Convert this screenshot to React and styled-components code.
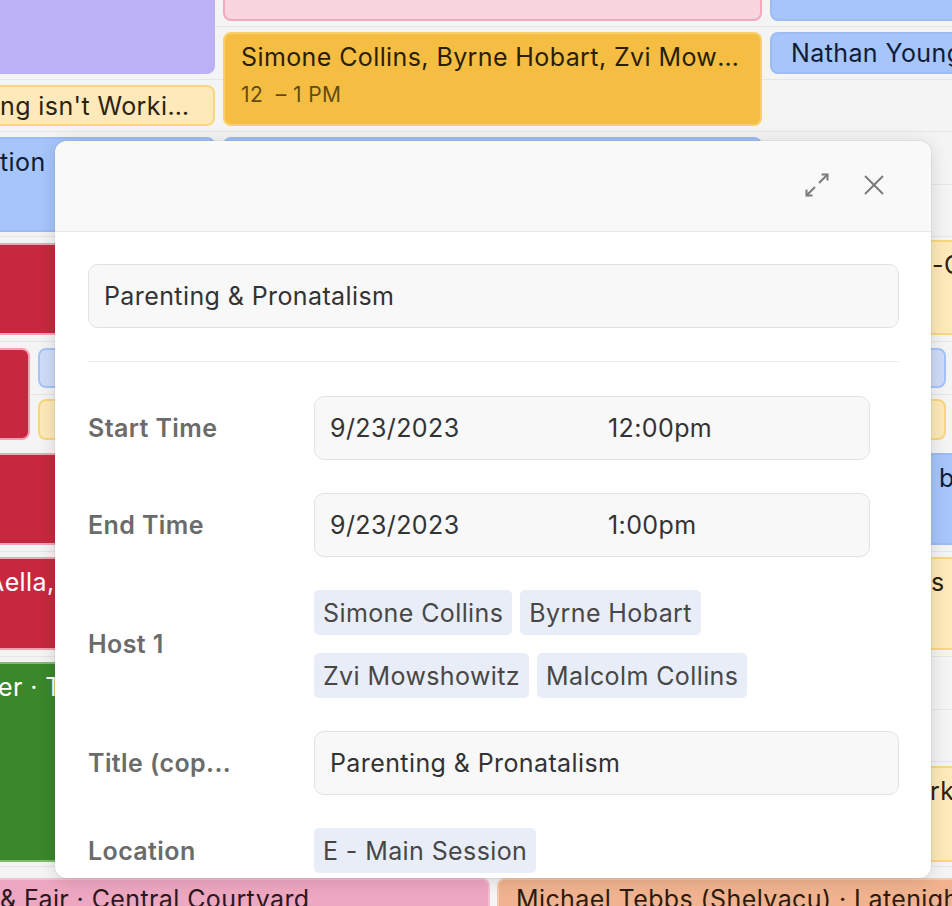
import styled, { createGlobalStyle, css } from 'styled-components';

// styles
const GlobalStyle = createGlobalStyle`
	html, body {
		margin: 0;
		padding: 0;
		overflow: hidden;
		background: #f4f4f4;
	}
	* {
		box-sizing: border-box;
	}
	body {
		font-family: Inter, 'Noto Sans', 'Liberation Sans', sans-serif;
		letter-spacing: 0.4px;
	}
`;

const tones = {
	purple: css`background: #bcb0f7; border-color: #bcb0f7; color: #1d1640;`,
	sand: css`background: #fde9b9; border-color: #f8d780; color: #2c2210;`,
	orange: css`background: #f5bd42; border-color: #f9d068; color: #2a1e05;`,
	blue: css`background: #a6c5fa; border-color: #9dbcf3; color: #0f1b36;`,
	sky: css`background: #cfdcf8; border-color: #a6c2f6; color: #0f1b36;`,
	blush: css`background: #f9d6df; border-color: #f3a8bb; color: #3a1520;`,
	red: css`background: #c8283f; border-color: #f2a2b5; color: #ffffff;`,
	green: css`background: #3b872b; border-color: #7fbb6c; color: #ffffff;`,
	pink: css`background: #eea7c0; border-color: #f4bfd2; color: #2b1820;`,
	peach: css`background: #f1b38f; border-color: #f6c8ab; color: #2d1b0e;`,
};

const Page = styled.div`
	position: relative;
	width: 952px;
	height: 906px;
	overflow: hidden;
`;

const Calendar = styled.div`
	display: flex;
	flex-direction: column;
	height: 100%;
	background-image: repeating-linear-gradient(
		to bottom,
		transparent 0,
		transparent 51.5px,
		#e6e6e6 51.5px,
		#e6e6e6 52.5px
	);
	background-position: 0 -25px;
`;

const Lanes = styled.div`
	display: flex;
	gap: 8px;
	flex: 0 0 878px;
	overflow: hidden;
	margin-left: -10px;
`;

const Lane = styled.div`
	display: flex;
	flex-direction: column;
	flex: 0 0 ${(p) => p.$w}px;
	min-width: 0;
`;

const Event = styled.div`
	flex: 0 0 auto;
	height: ${(p) => p.$h}px;
	margin-top: ${(p) => p.$mt || 0}px;
	border: 2px solid;
	border-radius: 8px;
	padding: ${(p) => (p.$short ? 4 : 8)}px 16px 0 ${(p) => p.$indent || 16}px;
	overflow: hidden;
	min-width: 0;
	${(p) => tones[p.$tone]}
`;

const EventTitle = styled.div`
	font-size: 25px;
	line-height: 30px;
	white-space: nowrap;
	overflow: hidden;
	text-indent: ${(p) => p.$shift || 0}px;
	text-overflow: ${(p) => (p.$clip ? 'clip' : 'ellipsis')};
`;

const EventTime = styled.div`
	margin-top: 10px;
	font-size: 21px;
	line-height: 26px;
	opacity: 0.72;
	white-space: pre;
`;

const Split = styled.div`
	display: flex;
	gap: 8px;
	height: ${(p) => p.$h}px;
	margin-top: ${(p) => p.$mt}px;
	padding-right: ${(p) => p.$pr || 0}px;
`;

const Stack = styled.div`
	display: flex;
	flex-direction: column;
	gap: 11px;
	flex: 1;
`;

const BottomRow = styled.div`
	display: flex;
	gap: 7px;
	flex: 0 0 40px;
	margin-left: -10px;
`;

const BottomEvent = styled(Event)`
	padding-top: 4px;
	border-radius: 8px 8px 0 0;
	border-bottom: none;
	flex: 0 0 ${(p) => p.$w}px;
`;

// modal
const Modal = styled.div`
	position: absolute;
	left: 55px;
	top: 141px;
	width: 876px;
	height: 737px;
	background: #ffffff;
	border-radius: 12px;
	box-shadow: 0 2px 18px rgba(0, 0, 0, 0.14), 0 0 0 1px rgba(0, 0, 0, 0.04);
	overflow: hidden;
	display: flex;
	flex-direction: column;
	color: #333333;
`;

const ModalHeader = styled.div`
	flex: 0 0 91px;
	display: flex;
	align-items: center;
	justify-content: flex-end;
	gap: 33px;
	padding: 0 45px 2px 0;
	background: #f9f9f9;
	border-bottom: 1px solid #e9e9e9;
`;

const IconButton = styled.button`
	display: flex;
	align-items: center;
	justify-content: center;
	width: 24px;
	height: 24px;
	padding: 0;
	border: none;
	background: none;
	color: #7b7b7b;
	cursor: pointer;
`;

const ModalBody = styled.div`
	padding: 32px 32px 0 33px;
	display: flex;
	flex-direction: column;
`;

const Input = styled.div`
	display: flex;
	align-items: center;
	height: 64px;
	padding: 0 15px;
	background: #f8f8f8;
	border: 1.5px solid #e2e2e2;
	border-radius: 10px;
	font-size: 25px;
	color: #333333;
	width: ${(p) => (p.$w ? `${p.$w}px` : '100%')};
`;

const Divider = styled.hr`
	margin: 33px 0 34px;
	border: none;
	border-top: 1.5px solid #ececec;
`;

const Fields = styled.div`
	display: flex;
	flex-direction: column;
	gap: 33px;
`;

const Field = styled.div`
	display: grid;
	grid-template-columns: 226px 1fr;
	align-items: center;
`;

const Label = styled.div`
	font-size: 25px;
	font-weight: 600;
	color: #6b6b6b;
	white-space: nowrap;
`;

const DatePart = styled.span`
	width: 278px;
`;

const Tags = styled.div`
	display: flex;
	flex-wrap: wrap;
	gap: 18px 8px;
`;

const Tag = styled.span`
	display: inline-flex;
	align-items: center;
	height: 45px;
	padding: 0 9px;
	background: #e9edf8;
	border-radius: 5px;
	font-size: 25px;
	color: #474747;
`;

const ExpandIcon = () => (
	<svg width='24' height='24' viewBox='0 0 24 24' fill='none' stroke='currentColor' strokeWidth='2'>
		<polyline points='16.5,1.5 22.5,1.5 22.5,7.5' />
		<line x1='22.5' y1='1.5' x2='14' y2='10' />
		<polyline points='1.5,16.5 1.5,22.5 7.5,22.5' />
		<line x1='1.5' y1='22.5' x2='10' y2='14' />
	</svg>
);

const CloseIcon = () => (
	<svg width='22' height='22' viewBox='0 0 22 22' fill='none' stroke='currentColor' strokeWidth='2'>
		<line x1='2' y1='2' x2='20' y2='20' />
		<line x1='20' y1='2' x2='2' y2='20' />
	</svg>
);

const hosts = ['Simone Collins', 'Byrne Hobart', 'Zvi Mowshowitz', 'Malcolm Collins'];

const App = () => {
	return (
		<Page>
			<GlobalStyle />
			<Calendar>
				<Lanes>
					<Lane $w={225}>
						<Event $tone='purple' $h={94} $mt={-20} />
						<Event $tone='sand' $h={41} $mt={11} $short $indent={8}>
							<EventTitle>ng isn't Worki…</EventTitle>
						</Event>
						<Event $tone='blue' $h={95} $mt={11} $indent={8}>
							<EventTitle>tion</EventTitle>
						</Event>
						<Event $tone='red' $h={92} $mt={11} />
						<Split $h={92} $mt={13}>
							<Event $tone='red' $h={92} style={{ width: 40 }} />
							<Stack>
								<Event $tone='sky' $h={40} />
								<Event $tone='sand' $h={41} />
							</Stack>
						</Split>
						<Event $tone='red' $h={92} $mt={13} />
						<Event $tone='red' $h={93} $mt={12} $indent={3}>
							<EventTitle $clip $shift={-8}>Aella, Richard Ngo</EventTitle>
						</Event>
						<Event $tone='green' $h={200} $mt={12} $indent={6}>
							<EventTitle $clip>er · Tent</EventTitle>
						</Event>
					</Lane>
					<Lane $w={539}>
						<Event $tone='blush' $h={41} $mt={-20} />
						<Event $tone='orange' $h={94} $mt={11}>
							<EventTitle>Simone Collins, Byrne Hobart, Zvi Mowshowitz, Malcolm Collins</EventTitle>
							<EventTime>12  – 1 PM</EventTime>
						</Event>
						<Event $tone='blue' $h={95} $mt={11} />
					</Lane>
					<Lane $w={320}>
						<Event $tone='blue' $h={41} $mt={-20} />
						<Event $tone='blue' $h={42} $mt={11} $short $indent={19}>
							<EventTitle $clip>Nathan Young</EventTitle>
						</Event>
						<Event $tone='sand' $h={95} $mt={166} $indent={160}>
							<EventTitle $clip>-Growth</EventTitle>
						</Event>
						<Split $h={92} $mt={13} $pr={144}>
							<Event $tone='red' $h={92} style={{ width: 60 }} />
							<Stack>
								<Event $tone='sky' $h={40} />
								<Event $tone='sand' $h={41} />
							</Stack>
						</Split>
						<Event $tone='blue' $h={92} $mt={13} $indent={167}>
							<EventTitle $clip>b</EventTitle>
						</Event>
						<Event $tone='sand' $h={93} $mt={12} $indent={159}>
							<EventTitle $clip>s and</EventTitle>
						</Event>
						<Event $tone='sand' $h={96} $mt={116} $indent={158}>
							<EventTitle $clip>rket</EventTitle>
						</Event>
					</Lane>
				</Lanes>
				<BottomRow>
					<BottomEvent $tone='pink' $h={40} $w={500} $indent={8}>
						<EventTitle $clip>& Fair · Central Courtyard</EventTitle>
					</BottomEvent>
					<BottomEvent $tone='peach' $h={40} $w={480} $indent={17}>
						<EventTitle $clip>Michael Tebbs (Shelvacu) · Latenight</EventTitle>
					</BottomEvent>
				</BottomRow>
			</Calendar>

			<Modal>
				<ModalHeader>
					<IconButton aria-label='Expand'>
						<ExpandIcon />
					</IconButton>
					<IconButton aria-label='Close'>
						<CloseIcon />
					</IconButton>
				</ModalHeader>
				<ModalBody>
					<Input>Parenting &amp; Pronatalism</Input>
					<Divider />
					<Fields>
						<Field>
							<Label>Start Time</Label>
							<Input $w={556}>
								<DatePart>9/23/2023</DatePart>
								<span>12:00pm</span>
							</Input>
						</Field>
						<Field>
							<Label>End Time</Label>
							<Input $w={556}>
								<DatePart>9/23/2023</DatePart>
								<span>1:00pm</span>
							</Input>
						</Field>
						<Field>
							<Label>Host 1</Label>
							<Tags>
								{hosts.map((host) => (
									<Tag key={host}>{host}</Tag>
								))}
							</Tags>
						</Field>
						<Field>
							<Label>Title (cop...</Label>
							<Input>Parenting &amp; Pronatalism</Input>
						</Field>
						<Field>
							<Label>Location</Label>
							<Tags>
								<Tag>E - Main Session</Tag>
							</Tags>
						</Field>
					</Fields>
				</ModalBody>
			</Modal>
		</Page>
	);
};

export default App;
